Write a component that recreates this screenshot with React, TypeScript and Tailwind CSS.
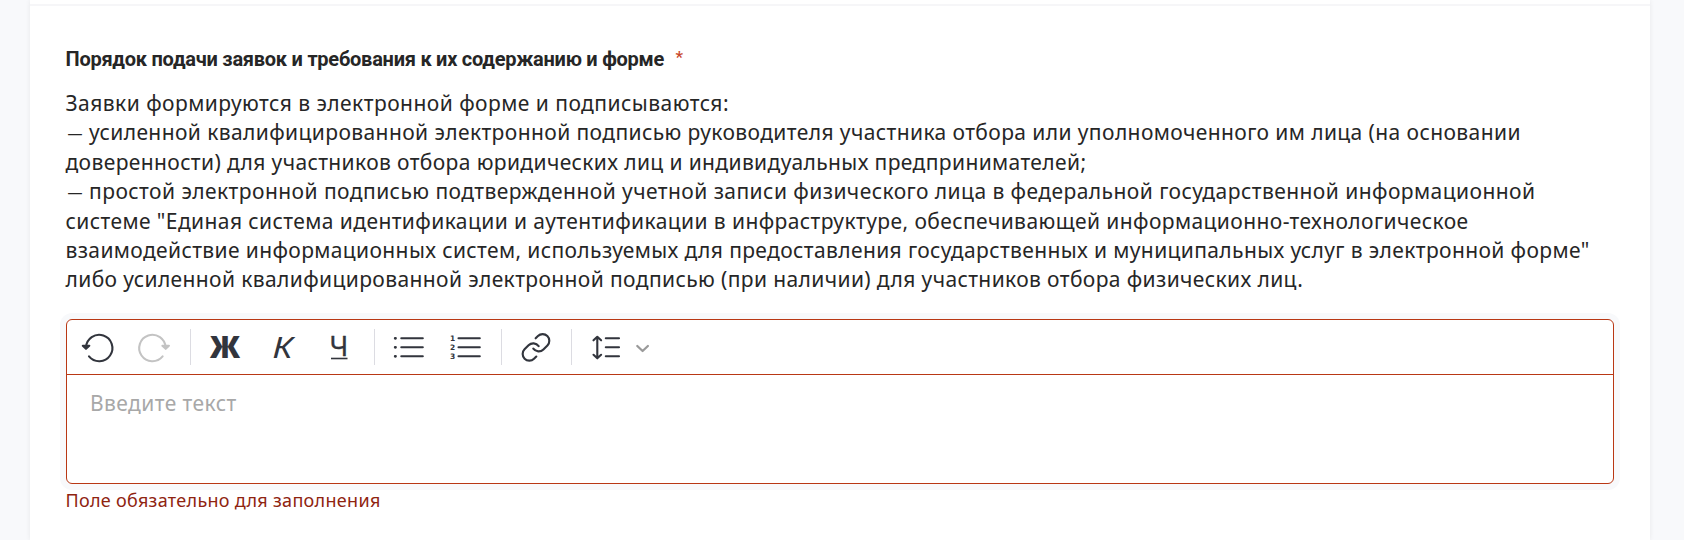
import type { ReactNode } from "react";

const lines: { text: string; tracking: string; dash?: boolean }[] = [
  { text: "Заявки формируются в электронной форме и подписываются:", tracking: "tracking-[0.46px]" },
  { text: "усиленной квалифицированной электронной подписью руководителя участника отбора или уполномоченного им лица (на основании", tracking: "tracking-[0.404px]", dash: true },
  { text: "доверенности) для участников отбора юридических лиц и индивидуальных предпринимателей;", tracking: "tracking-[0.377px]" },
  { text: "простой электронной подписью подтвержденной учетной записи физического лица в федеральной государственной информационной", tracking: "tracking-[0.443px]", dash: true },
  { text: 'системе "Единая система идентификации и аутентификации в инфраструктуре, обеспечивающей информационно-технологическое', tracking: "tracking-[0.414px]" },
  { text: 'взаимодействие информационных систем, используемых для предоставления государственных и муниципальных услуг в электронной форме"', tracking: "tracking-[0.377px]" },
  { text: "либо усиленной квалифицированной электронной подписью (при наличии) для участников отбора физических лиц.", tracking: "tracking-[0.386px]" },
];

function Tool({ x, w, children }: { x: number; w: number; children: ReactNode }) {
  return (
    <svg
      width={w}
      height={54}
      viewBox={`${x} 320 ${w} 54`}
      fill="none"
      stroke="#32353d"
      strokeWidth="2.1"
      strokeLinecap="round"
      strokeLinejoin="round"
      className="shrink-0"
    >
      {children}
    </svg>
  );
}

function Separator() {
  return <div className="h-9 w-px shrink-0 bg-[#dcdce2]" />;
}

function Toolbar() {
  return (
    <div className="flex h-[55px] items-center border-b border-[#b93815]">
      <Tool x={67} w={57}>
        <path d="M86 347.5 A13.2 13.2 0 1 1 89 356.4" />
        <path d="M82.8 345.8 L86 348.8 L89.3 345.8 Z" fill="#32353d" />
      </Tool>
      <Tool x={124} w={66}>
        <g stroke="#c3c3c3">
          <path d="M165.6 347.5 A13.2 13.2 0 1 0 162.6 356.4" />
          <path d="M162.4 345.8 L165.7 348.8 L168.9 345.8 Z" fill="#c3c3c3" />
        </g>
      </Tool>
      <Separator />
      <Tool x={191} w={64}>
        <text x="210" y="358" textLength="30" lengthAdjust="spacingAndGlyphs" fontSize="29.5" fontWeight="800" fill="#32353d" stroke="none" className="font-['Open_Sans',sans-serif]">Ж</text>
      </Tool>
      <Tool x={255} w={56}>
        <text x="272.4" y="358" textLength="20" lengthAdjust="spacingAndGlyphs" fontSize="29.5" fontStyle="italic" fill="#32353d" stroke="none" className="font-['Noto_Sans',sans-serif]">К</text>
      </Tool>
      <Tool x={311} w={63}>
        <text x="329.4" y="356.3" fontSize="28" fill="#32353d" strokeWidth="0.3" className="font-['Noto_Sans',sans-serif]">Ч</text>
        <path d="M331 358.5 H347.5" strokeWidth="1.6" strokeLinecap="butt" />
      </Tool>
      <Separator />
      <Tool x={375} w={63}>
        <path d="M401.3 338.3 H422.8 M401.3 347.3 H422.8 M401.3 356.3 H422.8" />
        <path d="M395.2 338.3 h.3 M395.2 347.3 h.3 M395.2 356.3 h.3" strokeWidth="2.8" />
      </Tool>
      <Tool x={438} w={63}>
        <path d="M458.5 338.3 H479.8 M458.5 347.3 H479.8 M458.5 356.3 H479.8" />
        <g fill="#32353d" stroke="none" fontSize="7.5" fontWeight="700" className="font-['DejaVu_Sans',sans-serif]">
          <text x="450" y="340.8">1</text>
          <text x="450" y="349.8">2</text>
          <text x="450" y="358.8">3</text>
        </g>
      </Tool>
      <Separator />
      <Tool x={502} w={69}>
        <g transform="translate(519.9 331.3) scale(1.34)" strokeWidth="1.6">
          <path d="M10 13a5 5 0 0 0 7.54.54l3-3a5 5 0 0 0-7.07-7.07l-1.72 1.71" />
          <path d="M14 11a5 5 0 0 0-7.54-.54l-3 3a5 5 0 0 0 7.07 7.07l1.71-1.71" />
        </g>
      </Tool>
      <Separator />
      <Tool x={572} w={53}>
        <path d="M597.3 337.5 V357.5 M593.5 340.3 L597.3 336.8 L601.1 340.3 M593.5 354.8 L597.3 358.3 L601.1 354.8" />
        <path d="M605.8 338.3 H619 M605.8 347.3 H619 M605.8 356.3 H619" />
      </Tool>
      <Tool x={625} w={32}>
        <path d="M637.3 346 L642.6 351 L647.9 346" stroke="#9a9a9a" strokeWidth="2.3" />
      </Tool>
    </div>
  );
}

export default function App() {
  return (
    <div className="flex h-[540px] overflow-hidden bg-[#f8f9fb] pl-[30px] font-['Noto_Sans',sans-serif]">
      <main className="flex w-[1620px] flex-col bg-white shadow-[0_0_5px_rgba(0,0,0,0.07)]">
        <div className="h-1.5 shrink-0 border-b-2 border-[#f6f6f8]" />
        <div className="flex flex-col px-9">
          <h2 className="mt-[38px] flex h-[30px] text-[20px] leading-[30px] font-bold whitespace-nowrap text-[#262626] font-['Roboto',sans-serif]">
            <span className="-ml-[0.5px] w-[610px] tracking-[-0.25px]">Порядок подачи заявок и требования к их содержанию и форме</span>
            <span className="text-[17px] leading-[27px] font-medium text-[#c8472a]">*</span>
          </h2>
          <div className="mt-[14.9px] -ml-[0.5px] text-[21px] leading-[29.4px] text-[#262626]">
            {lines.map((line) => (
              <p key={line.text} className={`flex whitespace-nowrap ${line.tracking}`}>
                {line.dash && <span className="w-[23.5px] pl-0.5 text-[15px] font-semibold tracking-normal">—</span>}
                <span>{line.text}</span>
              </p>
            ))}
          </div>
          <div className="mt-[24.3px] h-[165px] w-[1548px] rounded-[6px] border border-[#b93815] bg-white shadow-[0_0_0_6px_#f8f9fb]">
            <Toolbar />
            <div className="pt-[13px] pl-[23px] text-[21px] leading-[30px] tracking-[0.42px] text-[#a8a8a8]">Введите текст</div>
          </div>
          <p className="mt-[3px] -ml-[0.5px] text-[18px] leading-[26px] tracking-[0.3px] text-[#8f2410]">Поле обязательно для заполнения</p>
        </div>
      </main>
    </div>
  );
}
